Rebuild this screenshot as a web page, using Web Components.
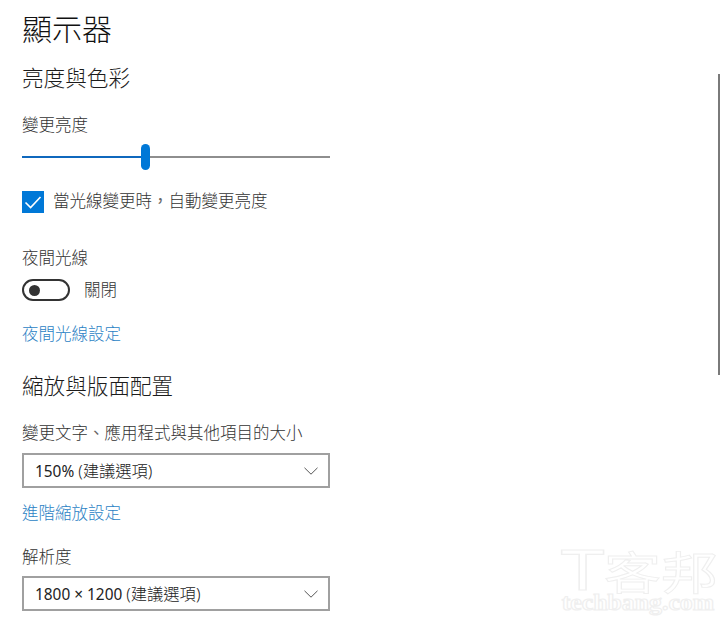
<!DOCTYPE html>
<html lang="zh-TW"><head><meta charset="utf-8">
<style>
html,body{margin:0;padding:0;background:#fff;height:617px;overflow:hidden}
body{font-family:"Noto Sans","Noto Sans CJK TC",sans-serif;color:#1a1a1a}
.l{font:400 15.4px/1 "Noto Sans",sans-serif}
.p{font-family:"Noto Sans CJK TC",sans-serif;font-weight:400;color:#666;line-height:1}
</style></head><body>
<template id="t-page"><style>
:host{display:block;position:relative;width:720px;height:617px;overflow:hidden;box-sizing:border-box;padding:0 0 0 22px}
.b{display:flex;flex-direction:column;width:308px}
</style><div class="b"><slot></slot></div><slot name="over"></slot></template>
<script>
const F='"Noto Sans","Noto Sans CJK TC",sans-serif';
function def(name,css,html){customElements.define(name,class extends HTMLElement{constructor(){super();const s=this.attachShadow({mode:'open'});s.innerHTML='<style>'+css+'</style>'+html;}});}
customElements.define('settings-page',class extends HTMLElement{constructor(){super();this.attachShadow({mode:'open'}).appendChild(document.getElementById('t-page').content.cloneNode(true))}});
def('page-title',':host{display:block;font:300 30px/40px '+F+';color:#111;margin-top:9px;height:40px;white-space:nowrap}','<slot></slot>');
def('section-title',':host{display:block;font:300 21.6px/30px '+F+';color:#1c1c1c;white-space:nowrap}','<slot></slot>');
def('field-label',':host{display:block;height:24px;font:300 16.5px/24px '+F+';color:#333;white-space:nowrap}','<slot></slot>');
def('link-text',':host{display:block;height:24px;font:300 16.5px/24px '+F+';color:#2b7fc4;white-space:nowrap}','<slot></slot>');
def('value-slider',':host{display:block;height:28px;width:308px;position:relative}.t{position:absolute;left:0;right:0;top:13px;height:2px;background:#8e8e8e}.f{position:absolute;left:0;top:13px;width:124px;height:2px;background:#0f68bd}.h{position:absolute;left:119px;top:1px;width:9px;height:26px;border-radius:4.5px;background:#0078d7}','<div class="t"></div><div class="f"></div><div class="h"></div>');
def('check-box',':host{display:flex;align-items:flex-start;gap:9px;height:22px;font:300 16.5px/20px '+F+';color:#333;white-space:nowrap}svg{display:block;flex:none}','<svg width="22" height="22" viewBox="0 0 22 22"><rect width="22" height="22" fill="#0078d7"/><path d="M3.5 11.5 L8.6 16.6 L18.5 6" fill="none" stroke="#fff" stroke-width="1.6"/></svg><span><slot></slot></span>');
def('toggle-switch',':host{display:flex;align-items:center;gap:14px;height:22px;font:300 16.5px/22px '+F+';color:#333;white-space:nowrap}.s{box-sizing:border-box;width:48px;height:22px;border:2px solid #333;border-radius:11px;display:flex;align-items:center;padding-left:5px}.d{width:11px;height:11px;border-radius:50%;background:#333}','<div class="s"><div class="d"></div></div><slot></slot>');
def('combo-box',':host{box-sizing:border-box;display:flex;align-items:center;justify-content:space-between;width:308px;height:35px;border:2px solid #a0a0a0;padding:0 10px 0 11px;font:300 16.3px/30px '+F+';color:#222;white-space:nowrap}svg{display:block}','<span><slot></slot></span><svg width="14" height="8" viewBox="0 0 14 8"><path d="M.5.8 L7 7.2 L13.5.8" fill="none" stroke="#555" stroke-width="1"/></svg>');
def('scroll-thumb',':host{position:absolute;left:718px;top:74px;width:2px;height:301px;background:#7a7a7a}','');
def('water-mark',':host{position:absolute;left:560px;top:550px;width:160px;height:65px;color:#fff;-webkit-text-stroke:1.2px #efefef}.a{display:flex;height:41px;font:400 57px/41px "Noto Sans CJK TC",sans-serif;white-space:nowrap}.t{display:block;width:44px;font:400 57px/41px "Liberation Sans",sans-serif;transform:scaleX(1.3);transform-origin:0 50%}.c{display:block;transform:scaleY(.8);transform-origin:50% 50%}.b{font:700 23px/24px "Liberation Serif",serif;white-space:nowrap;transform:scaleX(1.12);transform-origin:2px 50%;margin-left:2px}','<div class="a"><span class="t">T</span><span class="c">客邦</span></div><div class="b">techbang.com</div>');
</script>
<settings-page>
<page-title>顯示器</page-title>
<section-title style="margin-top:14px">亮度與色彩</section-title>
<field-label style="margin-top:20px">變更亮度</field-label>
<value-slider style="margin-top:6px"></value-slider>
<check-box style="margin-top:20px">當光線變更時<span class="p">，</span>自動變更亮度</check-box>
<field-label style="margin-top:33px">夜間光線</field-label>
<toggle-switch style="margin-top:9px">關閉</toggle-switch>
<link-text style="margin-top:21px">夜間光線設定</link-text>
<section-title style="margin-top:25px">縮放與版面配置</section-title>
<field-label style="margin-top:20px">變更文字<span class="p">、</span>應用程式與其他項目的大小</field-label>
<combo-box style="margin-top:8px"><span class="l">150% </span>(建議選項)</combo-box>
<link-text style="margin-top:13px">進階縮放設定</link-text>
<field-label style="margin-top:20px">解析度</field-label>
<combo-box style="margin-top:7px"><span class="l">1800 × 1200 </span>(建議選項)</combo-box>
<scroll-thumb slot="over"></scroll-thumb>
<water-mark slot="over"></water-mark>
</settings-page>
</body></html>
